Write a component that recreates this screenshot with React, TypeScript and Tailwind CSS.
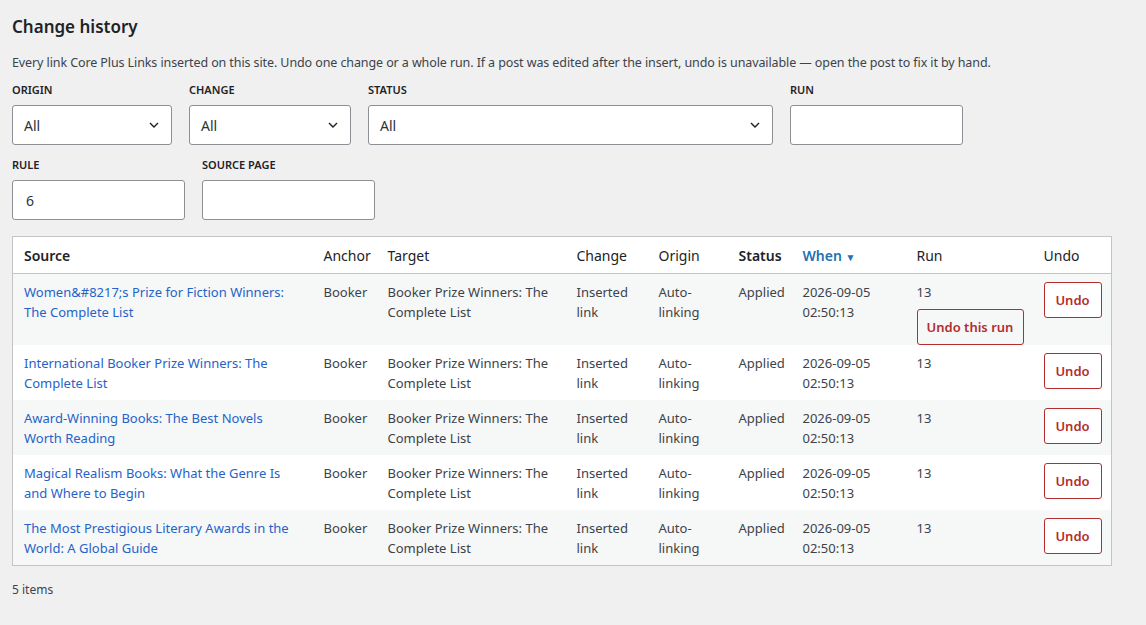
import React from "react";

const rows = [
  "Women&#8217;s Prize for Fiction Winners: The Complete List",
  "International Booker Prize Winners: The Complete List",
  "Award-Winning Books: The Best Novels Worth Reading",
  "Magical Realism Books: What the Genre Is and Where to Begin",
  "The Most Prestigious Literary Awards in the World: A Global Guide",
];

function Chevron() {
  return (
    <svg width="10" height="6" viewBox="0 0 10 6" fill="none" stroke="#1e1e1e" strokeWidth="1.4">
      <path d="M1 1l4 4 4-4" />
    </svg>
  );
}

function Sel({ w }: { w: string }) {
  return (
    <div className={`${w} h-[40px] bg-white border border-[#8c8f94] rounded-[3px] flex items-center justify-between pl-[11px] pr-[12px] text-[14px] text-[#2c3338]`}>
      <span>All</span>
      <Chevron />
    </div>
  );
}

const Label = ({ children }: { children: React.ReactNode }) => (
  <div className="text-[11px] font-semibold uppercase text-[#1d2327] h-[17px] mb-[6px]">{children}</div>
);

export default function App() {
  return (
    <div className="min-h-[625px] bg-[#f0f0f1] px-[12px] pt-[14px] text-[#3c434a] text-[13px]" style={{ fontFamily: '"Noto Sans", "Open Sans", sans-serif' }}>
      <h1 className="text-[17px] font-semibold text-[#1d2327] leading-[26px]">Change history</h1>
      <p className="mt-[14px] text-[12.5px] leading-[18px] text-[#3c434a] tracking-[-0.1px]">
        Every link Core Plus Links inserted on this site. Undo one change or a whole run. If a post was edited after the insert, undo is unavailable — open the post to fix it by hand.
      </p>
      <div className="flex gap-[17px] mt-[10px]">
        <div><Label>Origin</Label><Sel w="w-[160px]" /></div>
        <div><Label>Change</Label><Sel w="w-[162px]" /></div>
        <div><Label>Status</Label><Sel w="w-[405px]" /></div>
        <div><Label>Run</Label><div className="w-[173px] h-[40px] bg-white border border-[#8c8f94] rounded-[3px]" /></div>
      </div>
      <div className="flex gap-[17px] mt-[12px]">
        <div><Label>Rule</Label><div className="w-[173px] h-[40px] bg-white border border-[#8c8f94] rounded-[3px] flex items-center pl-[13px] text-[14px] text-[#2c3338]">6</div></div>
        <div><Label>Source page</Label><div className="w-[173px] h-[40px] bg-white border border-[#8c8f94] rounded-[3px]" /></div>
      </div>
      <table className="mt-[16px] w-[1099px] table-fixed border border-[#c3c4c7] bg-white border-collapse">
        <colgroup>
          {[300, 64, 189, 82, 80, 64, 114, 127, 79].map((w, i) => <col key={i} style={{ width: w }} />)}
        </colgroup>
        <thead>
          <tr className="h-[37px] border-b border-[#c3c4c7] text-[14px] text-[#1d2327] text-left">
            <th className="pl-[11px] font-semibold">Source</th>
            <th className="pl-[11px] font-normal">Anchor</th>
            <th className="pl-[11px] font-normal">Target</th>
            <th className="pl-[11px] font-normal">Change</th>
            <th className="pl-[11px] font-normal">Origin</th>
            <th className="pl-[11px] font-semibold">Status</th>
            <th className="pl-[11px] font-semibold text-[#2271b1]">When <span className="text-[10px]">▼</span></th>
            <th className="pl-[11px] font-normal">Run</th>
            <th className="pl-[11px] font-normal">Undo</th>
          </tr>
        </thead>
        <tbody>
          {rows.map((s, i) => (
            <tr key={i} className={`align-top leading-[20px] ${i % 2 === 0 ? "bg-[#f6f7f7]" : "bg-white"}`}>
              <td className={`pl-[11px] pr-[20px] pt-[8px] ${i === 0 ? "pb-[8px]" : "pb-[7px]"} text-[#2563c9]`}>{s}</td>
              <td className="pl-[11px] pt-[8px]">Booker</td>
              <td className="pl-[11px] pt-[8px] pr-[8px]">Booker Prize Winners: The Complete List</td>
              <td className="pl-[11px] pt-[8px]">Inserted<br />link</td>
              <td className="pl-[11px] pt-[8px]">Auto-<br />linking</td>
              <td className="pl-[11px] pt-[8px]">Applied</td>
              <td className="pl-[11px] pt-[8px]">2026-09-05<br />02:50:13</td>
              <td className="pl-[11px] pt-[8px]">
                13
                {i === 0 && (
                  <div className="mt-[7px] w-[107px] h-[36px] border border-[#b32d2e] rounded-[3px] text-[#b32d2e] font-semibold flex items-center justify-center">Undo this run</div>
                )}
              </td>
              <td className="pl-[11px] pt-[8px]">
                <div className="w-[58px] h-[36px] border border-[#b32d2e] rounded-[3px] text-[#b32d2e] font-semibold flex items-center justify-center bg-white">Undo</div>
              </td>
            </tr>
          ))}
        </tbody>
      </table>
      <div className="mt-[15px] text-[12px]">5 items</div>
    </div>
  );
}
